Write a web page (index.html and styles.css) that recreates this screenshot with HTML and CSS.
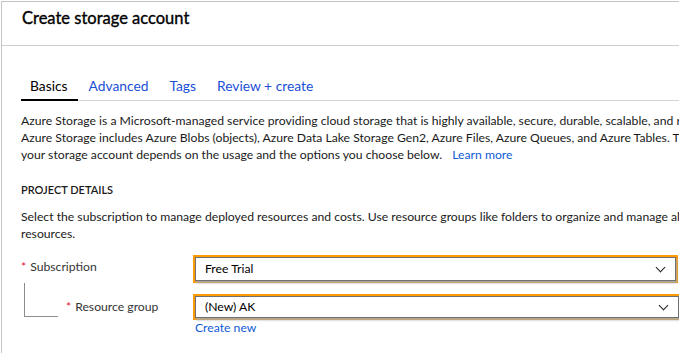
FILE: index.html
```html
<!DOCTYPE html>
<html>
	<head>
		<meta charset="utf-8">
		<title>Create storage account</title>
		<link rel="stylesheet" href="styles.css">
	</head>
	<body>
		<div class="blade">
			<div class="bladeHead">
				<h1>Create storage account</h1>
			</div>
			<div class="bladeBody">
				<ul class="tabs">
					<li class="active">Basics</li>
					<li>Advanced</li>
					<li>Tags</li>
					<li>Review + create</li>
				</ul>
				<p class="intro">
					<span>Azure Storage is a Microsoft-managed service providing cloud storage that is highly available, secure, durable, scalable, and redundant.</span>
					<span>Azure Storage includes Azure Blobs (objects), Azure Data Lake Storage Gen2, Azure Files, Azure Queues, and Azure Tables. The cost of</span>
					<span>your storage account depends on the usage and the options you choose below. <a href="">Learn more</a></span>
				</p>
				<h2 class="section">PROJECT DETAILS</h2>
				<p class="intro">
					<span>Select the subscription to manage deployed resources and costs. Use resource groups like folders to organize and manage all your</span>
					<span>resources.</span>
				</p>
				<div class="form">
					<div class="row">
						<label class="lbl"><i>*</i>Subscription</label>
						<div class="field">
							<div class="select first">Free Trial</div>
						</div>
					</div>
					<div class="row sub">
						<label class="lbl"><span class="tree"></span><i>*</i>Resource group</label>
						<div class="field">
							<div class="select second">(New) AK</div>
							<a href="" class="createNew">Create new</a>
						</div>
					</div>
				</div>
			</div>
		</div>
	</body>
</html>
```
FILE: styles.css
```css
*{
	padding: 0;
	margin: 0;
}
ul,li{
	list-style: none;
}
a{
	text-decoration: none;
	color: #0f5bd6;
}
body{
	width: 679px;
	height: 353px;
	overflow: hidden;
	font-family: Lato, "Open Sans", sans-serif;
	color: #1a1a1a;
	background: #fff;
}
.blade{
	margin: 1px 0 0 1px;
	height: 352px;
	border-left: 1px solid #c4c4c4;
	border-top: 1px solid #c4c4c4;
}
.bladeHead{
	height: 43px;
	border-bottom: 1px solid #cfcfcf;
	padding-left: 20px;
}
.bladeHead h1{
	font-size: 16.5px;
	font-weight: 400;
	line-height: 33px;
	color: #000;
	-webkit-text-stroke: 0.35px #000;
}
.bladeBody{
	padding: 26px 0 0 19px;
}
.tabs{
	display: flex;
	border-bottom: 1px solid #d4d4d4;
	width: 700px;
}
.tabs li{
	padding: 0 10px 0 9px;
	margin-right: 2px;
	font-size: 13.8px;
	line-height: 27px;
	color: #1a4fd6;
	border-bottom: 2px solid transparent;
	margin-bottom: -1px;
}
.tabs li.active{
	color: #000;
	border-bottom-color: #000;
}
.intro{
	margin-top: 11px;
	font-size: 12.2px;
	line-height: 17px;
	white-space: nowrap;
}
.intro span{
	display: block;
}
.intro a{
	margin-left: 7px;
}
.section{
	margin-top: 19px;
	font-size: 11px;
	font-weight: 600;
	line-height: 16px;
}
.section + .intro{
	margin-top: 10px;
}
.form{
	margin-top: 15px;
}
.row{
	display: flex;
	align-items: flex-start;
}
.row.sub{
	margin-top: 15px;
}
.lbl{
	width: 174px;
	font-size: 12.2px;
	line-height: 20px;
	color: #333;
	display: flex;
	align-items: flex-start;
}
.lbl i{
	font-style: normal;
	color: #e0172b;
	margin-right: 4px;
}
.row.sub .lbl{
	padding-top: 1px;
}
.tree{
	width: 33px;
	height: 33px;
	margin: -14px 8px 0 3px;
	border-left: 1px solid #8c8c8c;
	border-bottom: 1px solid #8c8c8c;
	flex-shrink: 0;
}
.field{
	flex: 1;
}
.select{
	position: relative;
	height: 22px;
	padding-left: 9px;
	font-size: 12.2px;
	line-height: 22px;
	color: #000;
	border: 1px solid #707070;
	box-shadow: 1px 2px 2px #a8a8a8, 0 0 0 2px #ff9a00;
}
.select.second{
	height: 20px;
	line-height: 20px;
}
.select::after{
	content: "";
	position: absolute;
	right: 11px;
	top: 50%;
	margin-top: -5px;
	width: 6px;
	height: 6px;
	border-right: 1px solid #222;
	border-bottom: 1px solid #222;
	transform: rotate(45deg);
}
.select.first{
	margin-right: 3px;
}
.createNew{
	display: block;
	font-size: 12.2px;
	line-height: 16px;
	margin-top: 2px;
}
```
